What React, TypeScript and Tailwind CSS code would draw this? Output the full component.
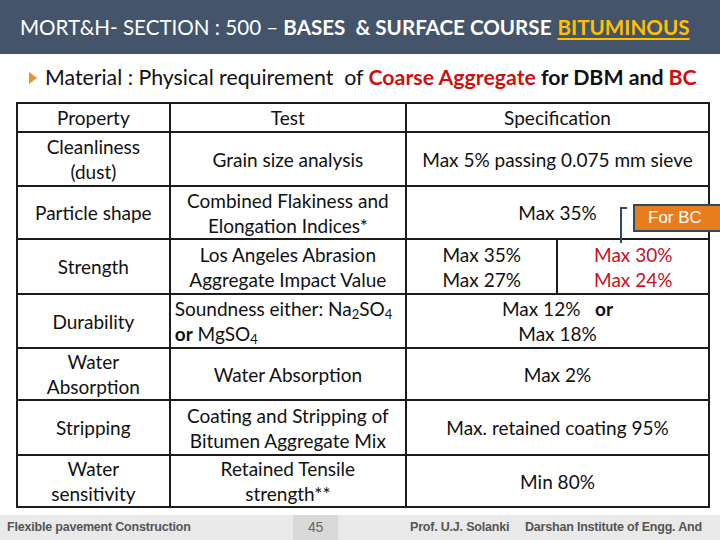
export default function App() {
  const cell = "border-2 border-[#1c1c1c] text-center align-middle px-1 py-0"
  return (
    <div className="relative w-[720px] h-[540px] overflow-hidden bg-white font-['Lato',sans-serif] text-[#111]">
      {/* Title bar */}
      <div className="h-[54px] bg-[#44546a] flex items-center pl-[20px] text-white text-[20.6px] whitespace-nowrap">
        <span>MORT&amp;H- SECTION : 500 – </span>
        <span className="font-bold ml-[5px]">BASES&nbsp; &amp; SURFACE COURSE </span>
        <span className="font-bold ml-[6px] text-[#ffc000] underline underline-offset-[3px] decoration-2">BITUMINOUS</span>
      </div>

      {/* Bullet line */}
      <div className="flex items-center h-[48px] pl-[29px] text-[21.3px] whitespace-nowrap">
        <svg width="8" height="12" viewBox="0 0 8 12" className="mr-[8px]">
          <polygon points="0,0 8,6 0,12" fill="#e8942a" />
        </svg>
        <span>Material : Physical requirement&nbsp; of </span>
        <span className="font-bold text-[#cc1111] ml-[5px]">Coarse Aggregate</span>
        <span className="font-bold ml-[5px]">for DBM and</span>
        <span className="font-bold text-[#cc1111] ml-[5px]">BC</span>
      </div>

      {/* Table */}
      <div className="pl-[16px]">
        <table className="border-collapse text-[19px] leading-[25px]" style={{ width: 694 }}>
          <colgroup>
            <col style={{ width: 153 }} />
            <col style={{ width: 237 }} />
            <col style={{ width: 152 }} />
            <col style={{ width: 152 }} />
          </colgroup>
          <tbody>
            <tr className="h-[29px]">
              <td className={cell}>Property</td>
              <td className={cell}>Test</td>
              <td className={cell} colSpan={2}>Specification</td>
            </tr>
            <tr className="h-[54px]">
              <td className={cell}>Cleanliness<br />(dust)</td>
              <td className={cell}>Grain size analysis</td>
              <td className={cell} colSpan={2}>Max 5% passing 0.075 mm sieve</td>
            </tr>
            <tr className="h-[53px]">
              <td className={cell}>Particle shape</td>
              <td className={cell}>Combined Flakiness and<br />Elongation Indices*</td>
              <td className={cell} colSpan={2}>Max 35%</td>
            </tr>
            <tr className="h-[55px]">
              <td className={cell}>Strength</td>
              <td className={cell}>Los Angeles Abrasion<br />Aggregate Impact Value</td>
              <td className={cell}>Max 35%<br />Max 27%</td>
              <td className={`${cell} text-[#c8101e]`}>Max 30%<br />Max 24%</td>
            </tr>
            <tr className="h-[54px]">
              <td className={cell}>Durability</td>
              <td className={`${cell} text-left`}>
                Soundness either: Na<sub className="text-[13px]">2</sub>SO<sub className="text-[13px]">4</sub>
                <br />
                <span className="font-bold">or</span> MgSO<sub className="text-[13px]">4</sub>
              </td>
              <td className={cell} colSpan={2}>
                Max 12%&nbsp;&nbsp; <span className="font-bold">or</span>
                <br />
                Max 18%
              </td>
            </tr>
            <tr className="h-[49px]">
              <td className={cell}>Water<br />Absorption</td>
              <td className={cell}>Water Absorption</td>
              <td className={cell} colSpan={2}>Max 2%</td>
            </tr>
            <tr className="h-[55px]">
              <td className={cell}>Stripping</td>
              <td className={cell}>Coating and Stripping of<br />Bitumen Aggregate Mix</td>
              <td className={cell} colSpan={2}>Max. retained coating 95%</td>
            </tr>
            <tr className="h-[52px]">
              <td className={cell}>Water<br />sensitivity</td>
              <td className={cell}>Retained Tensile<br />strength**</td>
              <td className={cell} colSpan={2}>Min 80%</td>
            </tr>
          </tbody>
        </table>
      </div>

      {/* For BC callout */}
      <div className="absolute left-[620px] top-[207px] w-[7px] h-[36px] border-l-2 border-t-2 border-[#2e4a62]" />
      <div className="absolute left-[633px] top-[204px] w-[90px] h-[28px] bg-[#e87d1e] border-2 border-[#2e4a62] flex items-center pl-[13px] text-white text-[17px] font-['Liberation_Sans',sans-serif]">
        For BC
      </div>

      {/* Footer */}
      <div className="absolute left-0 bottom-0 w-full h-[25px] bg-[#e9e9e9] flex items-center text-[12.5px] font-bold text-[#555] font-['Liberation_Sans',sans-serif] tracking-[-0.2px]">
        <span className="ml-[7px] w-[286px]">Flexible pavement Construction</span>
        <div className="w-[45px] h-full bg-[#d9d9d9] flex items-center justify-center font-normal text-[14px] text-[#666]">45</div>
        <span className="ml-[72px] w-[115px]">Prof. U.J. Solanki</span>
        <span>Darshan Institute of Engg. And</span>
      </div>
    </div>
  )
}
